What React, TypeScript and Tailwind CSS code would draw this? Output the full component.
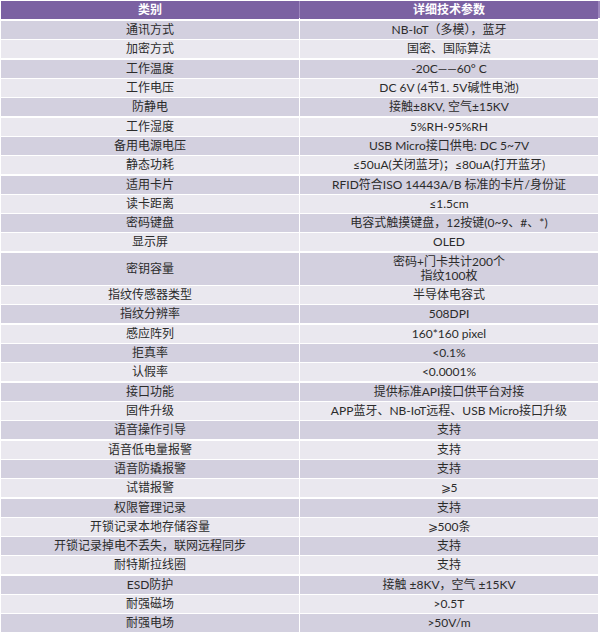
const rows: [string, string[]][] = [
  ['通讯方式', ['NB-IoT（多模），蓝牙']],
  ['加密方式', ['国密、国际算法']],
  ['工作温度', ['-20C——60° C']],
  ['工作电压', ['DC 6V (4节1. 5V碱性电池)']],
  ['防静电', ['接触±8KV, 空气±15KV']],
  ['工作湿度', ['5%RH-95%RH']],
  ['备用电源电压', ['USB Micro接口供电: DC 5~7V']],
  ['静态功耗', ['≤50uA(关闭蓝牙)；≤80uA(打开蓝牙)']],
  ['适用卡片', ['RFID符合ISO 14443A/B 标准的卡片/身份证']],
  ['读卡距离', ['≤1.5cm']],
  ['密码键盘', ['电容式触摸键盘，12按键(0~9、#、*)']],
  ['显示屏', ['OLED']],
  ['密钥容量', ['密码+门卡共计200个', '指纹100枚']],
  ['指纹传感器类型', ['半导体电容式']],
  ['指纹分辨率', ['508DPI']],
  ['感应阵列', ['160*160 pixel']],
  ['拒真率', ['<0.1%']],
  ['认假率', ['<0.0001%']],
  ['接口功能', ['提供标准API接口供平台对接']],
  ['固件升级', ['APP蓝牙、NB-IoT远程、USB Micro接口升级']],
  ['语音操作引导', ['支持']],
  ['语音低电量报警', ['支持']],
  ['语音防撬报警', ['支持']],
  ['试错报警', ['⩾5']],
  ['权限管理记录', ['支持']],
  ['开锁记录本地存储容量', ['⩾500条']],
  ['开锁记录掉电不丢失，联网远程同步', ['支持']],
  ['耐特斯拉线圈', ['支持']],
  ['ESD防护', ['接触 ±8KV，空气 ±15KV']],
  ['耐强磁场', ['>0.5T']],
  ['耐强电场', ['>50V/m']],
]

export default function App() {
  return (
    <div className="h-[638px] w-[600px] overflow-hidden bg-white pl-[1px] pt-[1px] font-['Lato','Noto_Sans_CJK_SC',sans-serif] text-[12px] text-[#2b2b2b]">
      <div className="grid h-[17px] grid-cols-[298px_298px] gap-x-[1px] bg-[#9d87bd] text-[12px] font-bold text-white">
        <div className="flex items-center justify-center bg-[#7b61a2]">类别</div>
        <div className="flex items-center justify-center bg-[#7b61a2]">详细技术参数</div>
      </div>

      <div className="mt-[3px] flex flex-col gap-y-[1.32px]">
        {rows.map(([label, value], i) => {
          const bg = i % 2 === 0 ? 'bg-[#d3d0df]' : 'bg-[#eae8ef]'
          const tall = value.length > 1
          return (
            <div
              key={label}
              className={`grid grid-cols-[298px_298px] gap-x-[1px] ${tall ? 'h-[32px]' : 'h-[18px]'}`}
            >
              <div className={`flex items-center justify-center ${bg}`}>{label}</div>
              <div className={`flex flex-col items-center justify-center leading-[14px] ${bg}`}>
                {value.map((v) => (
                  <span key={v}>{v}</span>
                ))}
              </div>
            </div>
          )
        })}
      </div>
    </div>
  )
}
